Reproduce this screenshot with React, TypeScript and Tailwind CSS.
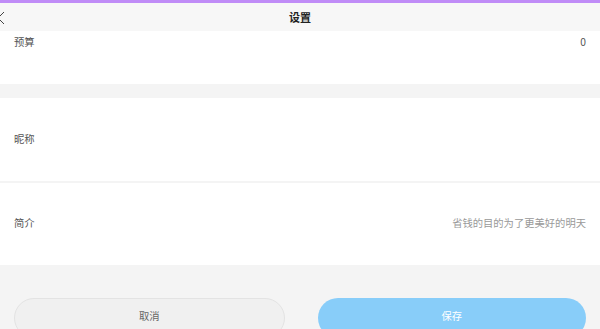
import React from 'react';

const font = { fontFamily: '"Noto Sans CJK SC", "Noto Sans", sans-serif' };

function Row({ label, value, className = '' }: { label: string; value?: string; className?: string }) {
  return (
    <div className={`flex shrink-0 justify-between bg-white px-[14px] text-[10.3px] ${className}`}>
      <span className="text-[#555]">{label}</span>
      {value && <span className="text-[#999]">{value}</span>}
    </div>
  );
}

export default function App() {
  return (
    <div className="flex h-[329px] w-[600px] flex-col overflow-hidden bg-[#f4f4f4]" style={font}>
      <div className="h-[3px] shrink-0 bg-[#c08cf7]" />
      <div className="relative flex h-[28px] shrink-0 items-center justify-center bg-[#f7f7f7] pt-[1px]">
        <svg className="absolute left-[-4px] top-[8px]" width="10" height="14" viewBox="0 0 10 14">
          <path d="M8 1 L2 7 L8 13" fill="none" stroke="#444" strokeWidth="1" />
        </svg>
        <span className="text-[11px] font-bold text-[#222]">设置</span>
      </div>

      <Row label="预算" value="0" className="h-[53px] items-start pt-[3px] [&>span:last-child]:text-[#555]" />

      <div className="mt-[14px] flex shrink-0 flex-col gap-[2px]">
        <Row label="昵称" className="h-[83px] items-center pb-[2px]" />
        <Row label="简介" value="省钱的目的为了更美好的明天" className="h-[82px] items-center pb-[3px]" />
      </div>

      <div className="mt-[33px] flex shrink-0 gap-[33px] px-[14px]">
        <button className="h-[40px] flex-1 rounded-full border border-[#e3e3e3] bg-[#f0f0f0] pb-[4px] text-[10.3px] text-[#666]">
          取消
        </button>
        <button className="h-[40px] flex-1 rounded-full bg-[#88cdf9] pb-[4px] text-[10.3px] text-white">
          保存
        </button>
      </div>
    </div>
  );
}
